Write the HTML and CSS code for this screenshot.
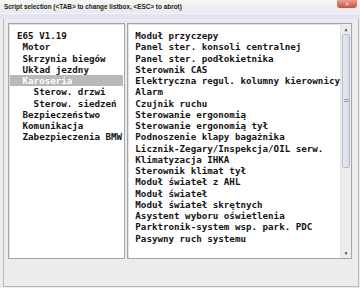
FILE: index.html
```html
<!DOCTYPE html>
<html lang="pl">
<head>
    <meta charset="UTF-8">
    <title>Script selection</title>
    <link rel="stylesheet" href="styles.css">
</head>
<body>
    <div class="window">
        <div class="titlebar">
            <span class="title">Script selection (&lt;TAB&gt; to change listbox, &lt;ESC&gt; to abrot)</span>
            <span class="close">&#x2715;</span>
        </div>
        <div class="strip"></div>

        <div class="frame">
            <div class="lists">
                <ul class="listbox tree">
                    <li>E65 V1.19</li>
                    <li> Motor</li>
                    <li> Skrzynia biegów</li>
                    <li> Układ jezdny</li>
                    <li class="selected"> Karoseria</li>
                    <li>   Sterow. drzwi</li>
                    <li>   Sterow. siedzeń</li>
                    <li> Bezpieczeństwo</li>
                    <li> Komunikacja</li>
                    <li> Zabezpieczenia BMW</li>
                </ul>

                <div class="listbox modules">
                    <ul>
                        <li>Moduł przyczepy</li>
                        <li>Panel ster. konsoli centralnej</li>
                        <li>Panel ster. podłokietnika</li>
                        <li>Sterownik CAS</li>
                        <li>Elektryczna regul. kolumny kierownicy</li>
                        <li>Alarm</li>
                        <li>Czujnik ruchu</li>
                        <li>Sterowanie ergonomią</li>
                        <li>Sterowanie ergonomią tył</li>
                        <li>Podnoszenie klapy bagażnika</li>
                        <li>Licznik-Zegary/Inspekcja/OIL serw.</li>
                        <li>Klimatyzacja IHKA</li>
                        <li>Sterownik klimat tył</li>
                        <li>Moduł świateł z AHL</li>
                        <li>Moduł świateł</li>
                        <li>Moduł świateł skrętnych</li>
                        <li>Asystent wyboru oświetlenia</li>
                        <li>Parktronik-system wsp. park. PDC</li>
                        <li>Pasywny ruch systemu</li>
                    </ul>
                    <div class="scrollbar">
                        <span class="arrow">&#9650;</span>
                        <div class="track">
                            <div class="thumb"><span class="grip"></span></div>
                        </div>
                        <span class="arrow">&#9660;</span>
                    </div>
                </div>
            </div>
        </div>
    </div>
</body>
</html>
```

FILE: styles.css
```css
html, body {
    margin: 0;
    padding: 0;
}

body {
    width: 360px;
    height: 288px;
    overflow: hidden;
    background: #ececec;
    font-family: "DejaVu Sans Mono", "Liberation Mono", monospace;
}

.window {
    display: flex;
    flex-direction: column;
    height: 288px;
}

.titlebar {
    position: relative;
    height: 13px;
    background: linear-gradient(#f7f7f7, #e9e9e9);
    display: flex;
    align-items: center;
    padding-left: 4px;
}

.title {
    font-family: "Liberation Sans", Arial, sans-serif;
    font-weight: bold;
    font-size: 6.4px;
    color: #222;
    white-space: nowrap;
}

.close {
    position: absolute;
    right: 3px;
    top: 0;
    width: 20px;
    height: 8px;
    background: linear-gradient(#e8a090, #c9503c);
    border-radius: 0 0 3px 3px;
    color: #fff;
    font-family: "DejaVu Sans", sans-serif;
    font-size: 5px;
    line-height: 8px;
    text-align: center;
}

.strip {
    height: 5px;
    background: #dfe5f2;
    border-top: 1px solid #f4f6fa;
}

.frame {
    flex: 1;
    margin: 0 0 1px 3px;
    width: 356px;
    box-sizing: border-box;
    border-left: 1px solid #b9b9b9;
    border-right: 1px solid #b9b9b9;
    border-bottom: 1px solid #b9b9b9;
    padding: 4px 6px 0 4px;
}

.lists {
    display: flex;
    gap: 2px;
    height: 236px;
}

.listbox {
    margin: 0;
    padding: 0;
    list-style: none;
    background: #fff;
    border: 1px solid #a5a5a5;
    box-shadow: inset 1px 1px 0 #e2e2e2;
    box-sizing: border-box;
    height: 236px;
}

.listbox li {
    white-space: pre;
    font-weight: bold;
    font-size: 9.2px;
    line-height: 11.25px;
    height: 11.25px;
    color: #141414;
}

.tree {
    width: 119px;
    padding: 6px 1px 0 1px;
}

.tree li {
    padding-left: 7px;
}

.tree li.selected {
    background: #b9b9b9;
    color: #fff;
}

.modules {
    flex: 1;
    display: flex;
}

.modules ul {
    flex: 1;
    margin: 0;
    padding: 6px 0 0 7px;
    list-style: none;
}

.scrollbar {
    width: 10px;
    display: flex;
    flex-direction: column;
    background: #ededed;
    border-left: 1px solid #e2e2e2;
}

.arrow {
    height: 10px;
    font-size: 5px;
    line-height: 10px;
    text-align: center;
    color: #555;
}

.track {
    flex: 1;
    display: flex;
    flex-direction: column;
}

.thumb {
    height: 132px;
    margin: 0 1px;
    background: linear-gradient(90deg, #e6eaf1, #d6dce6);
    border: 1px solid #b6bcc6;
    border-radius: 2px;
    display: flex;
    align-items: center;
    justify-content: center;
}

.grip {
    width: 5px;
    height: 4px;
    background: repeating-linear-gradient(#9aa0aa 0 1px, transparent 1px 2px);
}
```
